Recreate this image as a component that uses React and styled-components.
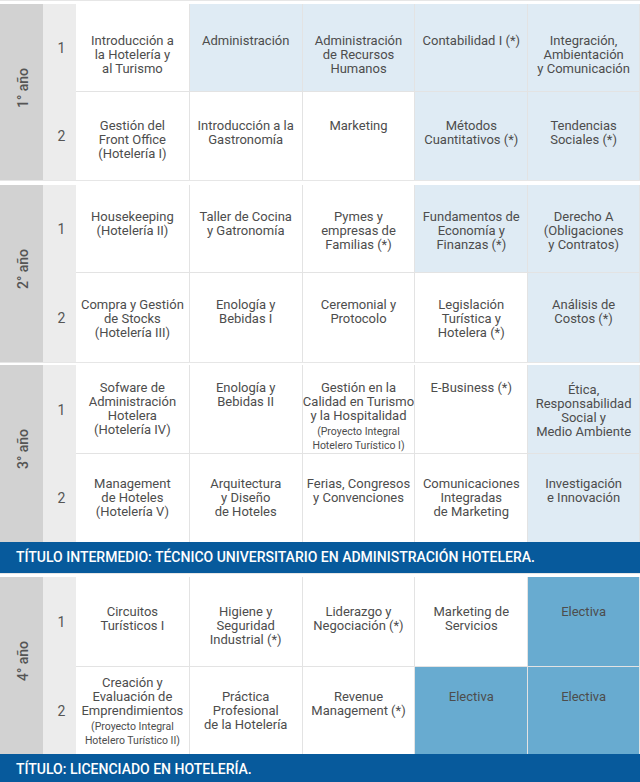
import React from "react"
import styled, { createGlobalStyle } from "styled-components"

const GlobalStyle = createGlobalStyle`
  html, body {
    margin: 0;
    padding: 0;
    background: #fff;
  }
  body {
    font-family: Roboto, "Liberation Sans", Arial, sans-serif;
    color: #4d4d4d;
  }
`

// tone: l = light blue, d = dark blue, "" = white
// shift nudges one cell's text up or down from the row's padding
const years = [
  {
    label: "1° año",
    gap: 3,
    rows: [
      {
        h: 88,
        pad: 30,
        cells: [
          ["", ["Introducción a", "la Hotelería y", "al Turismo"]],
          ["l", ["Administración"]],
          ["l", ["Administración", "de Recursos", "Humanos"]],
          ["l", ["Contabilidad I (*)"]],
          ["l", ["Integración,", "Ambientación", "y Comunicación"]],
        ],
      },
      {
        h: 88,
        pad: 27,
        cells: [
          ["", ["Gestión del", "Front Office", "(Hotelería I)"]],
          ["", ["Introducción a la", "Gastronomía"]],
          ["", ["Marketing"]],
          ["l", ["Métodos", "Cuantitativos (*)"]],
          ["l", ["Tendencias", "Sociales (*)"]],
        ],
      },
    ],
  },
  {
    label: "2° año",
    gap: 4,
    rows: [
      {
        h: 88,
        pad: 25,
        cells: [
          ["", ["Housekeeping", "(Hotelería II)"]],
          ["", ["Taller de Cocina", "y Gatronomía"]],
          ["", ["Pymes y", "empresas de", "Familias (*)"]],
          ["l", ["Fundamentos de", "Economía y", "Finanzas (*)"]],
          ["l", ["Derecho A", "(Obligaciones", "y Contratos)"]],
        ],
      },
      {
        h: 89,
        pad: 25,
        cells: [
          ["", ["Compra y Gestión", "de Stocks", "(Hotelería III)"]],
          ["", ["Enología y", "Bebidas I"]],
          ["", ["Ceremonial y", "Protocolo"]],
          ["", ["Legislación", "Turística y", "Hotelera (*)"]],
          ["l", ["Análisis de", "Costos (*)"]],
        ],
      },
    ],
  },
  {
    label: "3° año",
    gap: 2,
    banner: "TÍTULO INTERMEDIO: TÉCNICO UNIVERSITARIO EN ADMINISTRACIÓN HOTELERA.",
    rows: [
      {
        h: 89,
        pad: 16,
        cells: [
          ["", ["Sofware de", "Administración", "Hotelera", "(Hotelería IV)"]],
          ["", ["Enología y", "Bebidas II"]],
          [
            "",
            ["Gestión en la", "Calidad en Turismo", "y la Hospitalidad"],
            ["(Proyecto Integral", "Hotelero Turístico I)"],
          ],
          ["", ["E-Business (*)"]],
          ["l", ["Ética,", "Responsabilidad", "Social y", "Medio Ambiente"], null, 2],
        ],
      },
      {
        h: 88,
        pad: 23,
        cells: [
          ["", ["Management", "de Hoteles", "(Hotelería V)"]],
          ["", ["Arquitectura", "y Diseño", "de Hoteles"]],
          ["", ["Ferias, Congresos", "y Convenciones"]],
          ["", ["Comunicaciones", "Integradas", "de Marketing"]],
          ["l", ["Investigación", "e Innovación"]],
        ],
      },
    ],
  },
  {
    label: "4° año",
    gap: 3,
    banner: "TÍTULO: LICENCIADO EN HOTELERÍA.",
    rows: [
      {
        h: 90,
        pad: 28,
        cells: [
          ["", ["Circuitos", "Turísticos I"]],
          ["", ["Higiene y", "Seguridad", "Industrial (*)"]],
          ["", ["Liderazgo y", "Negociación (*)"]],
          ["", ["Marketing de", "Servicios"]],
          ["d", ["Electiva"]],
        ],
      },
      {
        h: 87,
        pad: 23,
        cells: [
          [
            "",
            ["Creación y", "Evaluación de", "Emprendimientos"],
            ["(Proyecto Integral", "Hotelero Turístico II)"],
            -14,
          ],
          ["", ["Práctica", "Profesional", "de la Hotelería"]],
          ["", ["Revenue", "Management (*)"]],
          ["d", ["Electiva"]],
          ["d", ["Electiva"]],
        ],
      },
    ],
  },
]

const tones = {
  "": "#ffffff",
  l: "#dfebf4",
  d: "#68abd0",
}

export default function App() {
  return (
    <>
      <GlobalStyle />
      <Plan>
        {years.map((year, y) => (
          <React.Fragment key={y}>
            <Block $gap={year.gap}>
              <Grid $rows={year.rows.map(r => r.h + "px").join(" ")}>
                <YearCell>
                  <YearLabel>{year.label}</YearLabel>
                </YearCell>
                {year.rows.map((row, r) => (
                  <React.Fragment key={r}>
                    <NumCell style={{ gridRow: r + 1 }}>{r + 1}</NumCell>
                    {row.cells.map(([tone, lines, small, shift], c) => (
                      <Cell
                        key={c}
                        $tone={tone}
                        $pad={row.pad + (shift || 0)}
                        $first={c === 0}
                        $lastCol={c === row.cells.length - 1}
                        $lastRow={r === year.rows.length - 1}
                        style={{ gridRow: r + 1 }}
                      >
                        {lines.map((l, i) => (
                          <Line key={i}>{l}</Line>
                        ))}
                        {small &&
                          small.map((l, i) => (
                            <SmallLine key={i} $first={i === 0}>
                              {l}
                            </SmallLine>
                          ))}
                      </Cell>
                    ))}
                  </React.Fragment>
                ))}
              </Grid>
            </Block>
            {year.banner && <Banner>{year.banner}</Banner>}
          </React.Fragment>
        ))}
      </Plan>
    </>
  )
}

const Plan = styled.div`
  width: 640px;
  display: flex;
  flex-direction: column;
`

const Block = styled.section`
  border-top: 1px solid #e6e6e6;
  padding-top: ${props => props.$gap}px;
  background: #fff;
`

const Grid = styled.div`
  display: grid;
  grid-template-columns: 43px 33px repeat(5, 1fr);
  grid-template-rows: ${props => props.$rows};
`

const YearCell = styled.div`
  grid-column: 1;
  grid-row: 1 / span 2;
  background: #d2d2d2;
  display: flex;
  align-items: center;
  justify-content: center;
  padding-bottom: 8px;
`

const YearLabel = styled.span`
  writing-mode: vertical-rl;
  transform: rotate(180deg);
  white-space: nowrap;
  font-size: 14px;
  line-height: 16px;
  font-weight: 500;
  color: #555;
  margin-left: 2px;
`

const NumCell = styled.div`
  grid-column: 2;
  background: #ececec;
  display: flex;
  align-items: center;
  justify-content: center;
  padding-left: 4px;
  font-size: 14px;
  color: #555;
`

const Cell = styled.div`
  background: ${props => tones[props.$tone]};
  border-left: ${props => (props.$first ? "none" : "1px solid #e3e3e3")};
  border-right: ${props => (props.$lastCol ? "1px solid #e3e3e3" : "none")};
  border-bottom: ${props => (props.$lastRow ? "none" : "1px solid #e3e3e3")};
  padding: ${props => props.$pad}px 2px 0;
  display: flex;
  flex-direction: column;
  align-items: center;
  text-align: center;
  font-size: 13px;
  line-height: 14px;
  color: #4d4d4d;
  overflow: hidden;
`

const Line = styled.span`
  display: block;
  white-space: nowrap;
`

const SmallLine = styled.span`
  display: block;
  white-space: nowrap;
  font-size: 10.5px;
  line-height: 14px;
  margin-top: ${props => (props.$first ? "2px" : "0")};
`

const Banner = styled.div`
  background: #075a9c;
  color: #fff;
  font-size: 14px;
  font-weight: 500;
  line-height: 31px;
  height: 31px;
  padding-left: 16px;
  white-space: nowrap;
`
